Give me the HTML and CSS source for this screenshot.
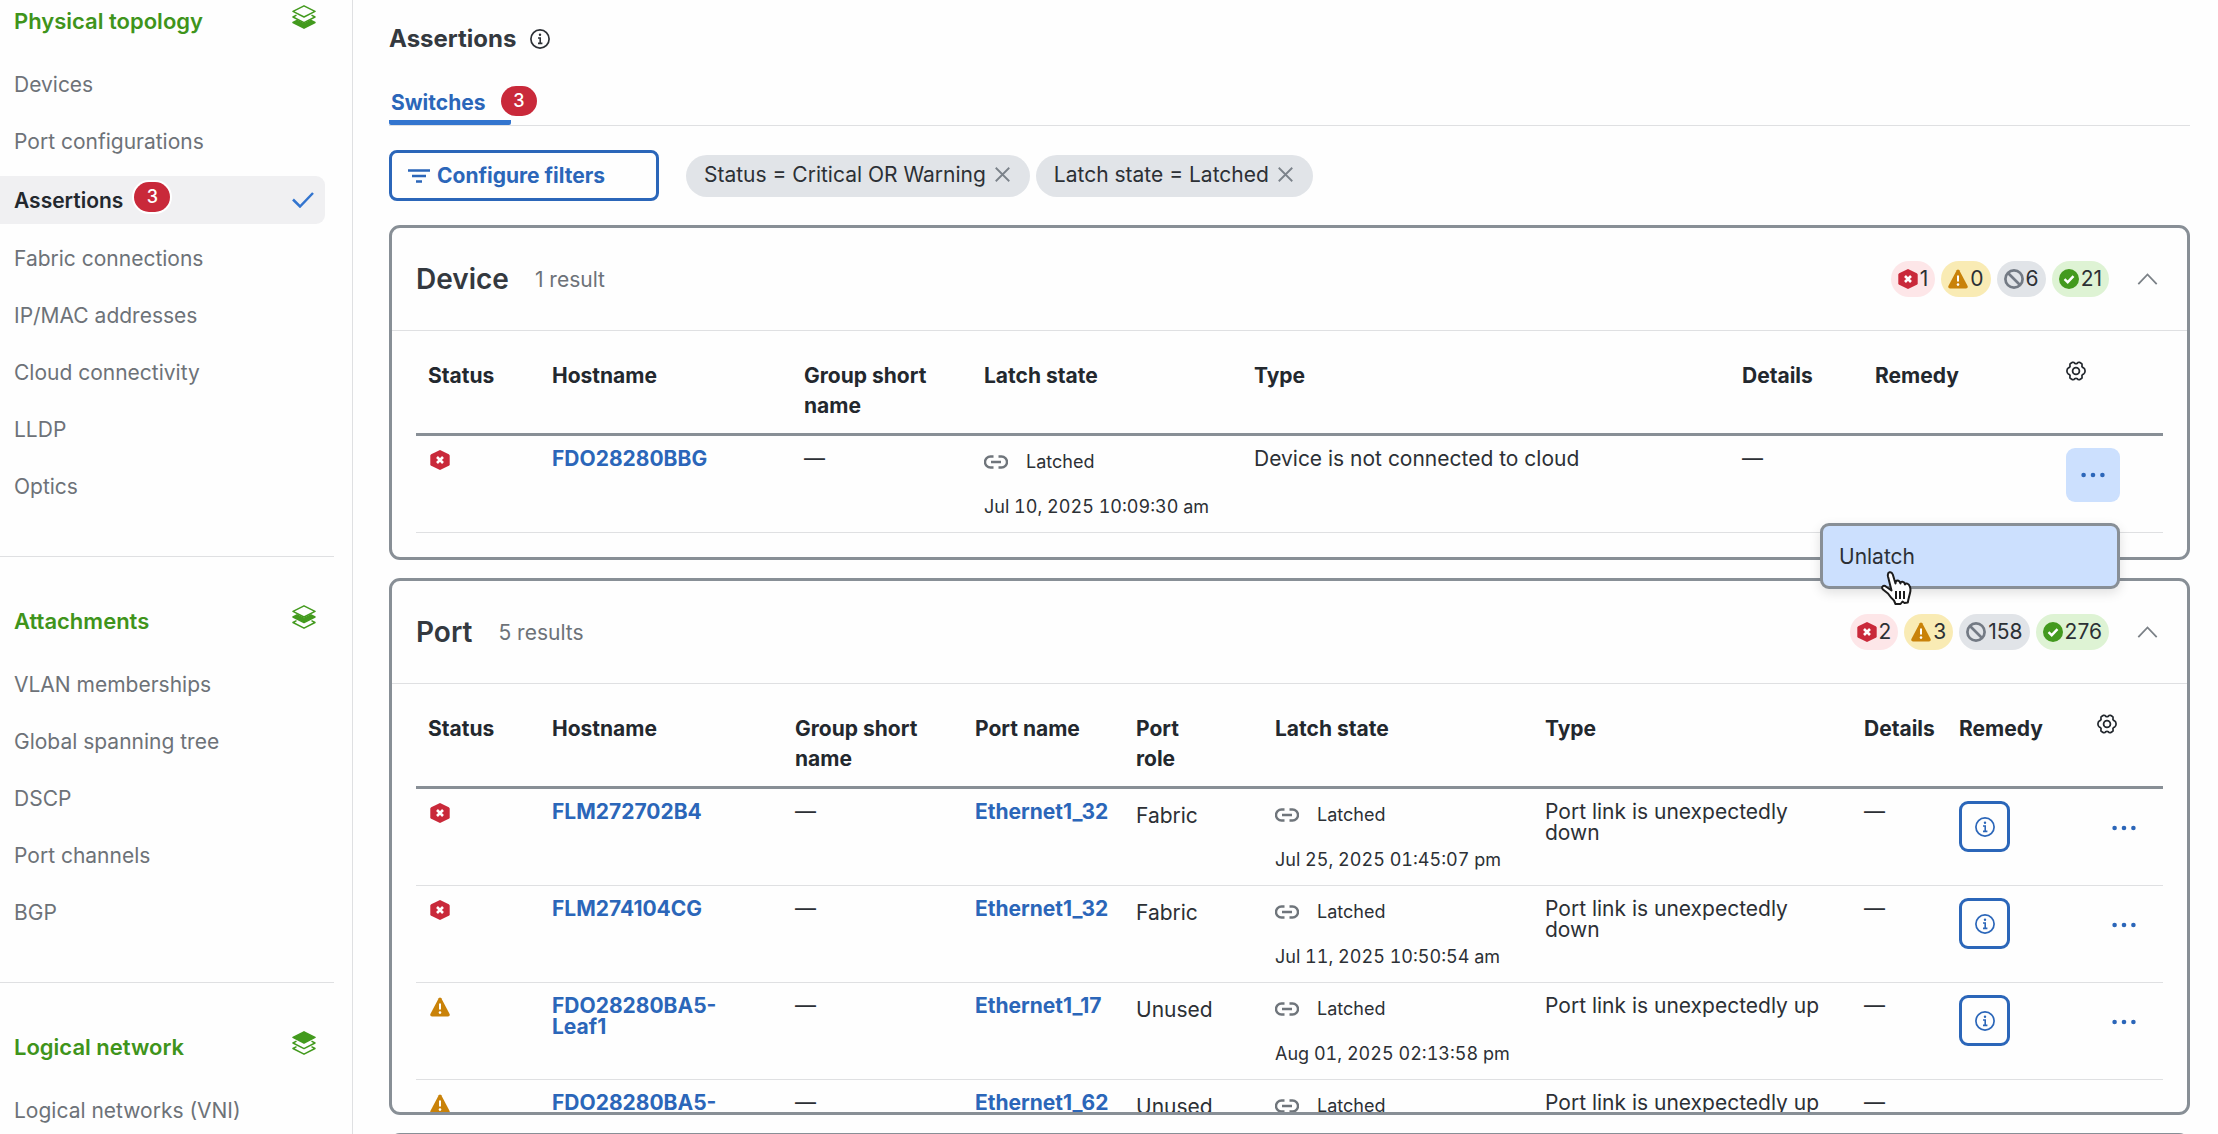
FILE: index.html
```html
<!DOCTYPE html>
<html lang="en">
<head>
    <meta charset="UTF-8">
    <meta name="viewport" content="width=device-width, initial-scale=1.0">
    <title>Assertions</title>
    <link rel="stylesheet" href="styles.css">
</head>
<body>

    <!-- Icons used more than once -->
    <svg class="icon-defs" aria-hidden="true">
        <symbol id="icon-critical" viewBox="0 0 20 20">
            <path d="M10 0 18.800 4.200Q19.700 4.700 19.700 5.700V14.300Q19.700 15.300 18.800 15.800L10 20 1.200 15.800Q.300 15.300 .300 14.300V5.700Q.300 4.700 1.200 4.200Z" fill="#c9293a"/>
            <path d="M7 7 13 13M13 7 7 13" stroke="#fff" stroke-width="2.600"/>
        </symbol>
        <symbol id="icon-warning" viewBox="0 0 20 20">
            <path d="M8.700 1.300Q10 -.500 11.300 1.300L19.600 17Q20.300 19.500 18 19.500H2Q-.300 19.500 .400 17Z" fill="#c98209"/>
            <path d="M10 6.500V12.500" stroke="#fff" stroke-width="2"/>
            <circle cx="10" cy="15.600" r="1.300" fill="#fff"/>
        </symbol>
        <symbol id="icon-disabled" viewBox="0 0 20 20">
            <circle cx="10" cy="10" r="8.600" fill="none" stroke="#737a84" stroke-width="2.700"/>
            <path d="M4 4 16 16" stroke="#737a84" stroke-width="2.700"/>
        </symbol>
        <symbol id="icon-ok" viewBox="0 0 20 20">
            <circle cx="10" cy="10" r="10" fill="#439a1e"/>
            <path d="M5.500 10.200 8.700 13.200 14.500 7.200" fill="none" stroke="#fff" stroke-width="2.400"/>
        </symbol>
        <symbol id="icon-link" viewBox="0 0 24 14">
            <path d="M9.500 1.500H6.500A5.500 5.500 0 0 0 6.500 12.500H9.500M14.500 1.500H17.500A5.500 5.500 0 0 1 17.500 12.500H14.500M7 7H17" fill="none" stroke="#6f757b" stroke-width="2.400"/>
        </symbol>
        <symbol id="icon-info" viewBox="0 0 20 20">
            <circle cx="10" cy="10" r="9.100" fill="none" stroke="currentColor" stroke-width="1.700"/>
            <circle cx="10" cy="5.800" r="1.200" fill="currentColor"/>
            <path d="M8 9H10.200V14.200M8 14.400H12.400" fill="none" stroke="currentColor" stroke-width="1.600"/>
        </symbol>
        <symbol id="icon-dots" viewBox="0 0 24 6">
            <circle cx="2.600" cy="3" r="2.300" fill="currentColor"/>
            <circle cx="12" cy="3" r="2.300" fill="currentColor"/>
            <circle cx="21.400" cy="3" r="2.300" fill="currentColor"/>
        </symbol>
        <symbol id="icon-up" viewBox="0 0 20 12">
            <path d="M.800 11.200 10 1.500 19.200 11.200" fill="none" stroke="#7b8187" stroke-width="1.800"/>
        </symbol>
        <symbol id="icon-close" viewBox="0 0 14 14">
            <path d="M.700 .700 13.300 13.300M13.300 .700 .700 13.300" stroke="#7b828a" stroke-width="1.700"/>
        </symbol>
        <symbol id="icon-gear" viewBox="0 0 20 20">
            <path d="M6.500 1.300Q8 1 8.600 2.200 10 3.200 11.400 2.200 12 1 13.500 1.300L15.800 2.700Q16.400 4 15.900 5.300 16.200 6.600 17.500 6.800 19 7.600 19.100 10 19 12.400 17.500 13.200 16.200 13.400 15.900 14.700 16.400 16 15.800 17.300L13.500 18.700Q12 19 11.400 17.800 10 16.800 8.600 17.800 8 19 6.500 18.700L4.200 17.300Q3.600 16 4.100 14.700 3.800 13.400 2.500 13.200 1 12.400 .900 10 1 7.600 2.500 6.800 3.800 6.600 4.100 5.300 3.600 4 4.200 2.700Z" fill="none" stroke="#23282e" stroke-width="1.700" stroke-linejoin="round"/>
            <circle cx="10" cy="10" r="3.400" fill="none" stroke="#23282e" stroke-width="1.800"/>
        </symbol>
    </svg>

    <div class="layout">

        <!-- Side navigation -->
        <nav class="sidebar">
            <section class="nav-section">
                <div class="nav-heading">
                    <h2>Physical topology</h2>
                    <svg class="layers" viewBox="0 0 24 24"><path d="M12 .800 23 6.400 12 12 1 6.400ZM4.500 10.200 1 12 12 17.600 23 12 19.500 10.200"/><path class="solid" d="M5 15.300 1 17.500 12 23.200 23 17.500 19 15.300 12 19Z"/></svg>
                </div>
                <ul>
                    <li><a href="#">Devices</a></li>
                    <li><a href="#">Port configurations</a></li>
                    <li class="active">
                        <a href="#">Assertions <span class="badge">3</span>
                            <svg class="check" viewBox="0 0 22 16"><path d="M1 7.500 8 14.500 21 1"/></svg>
                        </a>
                    </li>
                    <li><a href="#">Fabric connections</a></li>
                    <li><a href="#">IP/MAC addresses</a></li>
                    <li><a href="#">Cloud connectivity</a></li>
                    <li><a href="#">LLDP</a></li>
                    <li><a href="#">Optics</a></li>
                </ul>
            </section>
            <section class="nav-section">
                <div class="nav-heading">
                    <h2>Attachments</h2>
                    <svg class="layers" viewBox="0 0 24 24"><path d="M12 .800 23 6.400 12 12 1 6.400ZM4.500 15.700 1 17.500 12 23.200 23 17.500 19.500 15.700"/><path class="solid" d="M5 9.800 1 12 12 17.600 23 12 19 9.800 12 13.400Z"/></svg>
                </div>
                <ul>
                    <li><a href="#">VLAN memberships</a></li>
                    <li><a href="#">Global spanning tree</a></li>
                    <li><a href="#">DSCP</a></li>
                    <li><a href="#">Port channels</a></li>
                    <li><a href="#">BGP</a></li>
                </ul>
            </section>
            <section class="nav-section">
                <div class="nav-heading">
                    <h2>Logical network</h2>
                    <svg class="layers" viewBox="0 0 24 24"><path class="solid" d="M12 .800 23 6.400 12 12 1 6.400Z"/><path d="M4.500 10.200 1 12 12 17.600 23 12 19.500 10.200M4.500 15.700 1 17.500 12 23.200 23 17.500 19.500 15.700"/></svg>
                </div>
                <ul>
                    <li><a href="#">Logical networks (VNI)</a></li>
                </ul>
            </section>
        </nav>

        <main class="content">
            <div class="page-title">
                <h1>Assertions</h1>
                <svg class="info"><use href="#icon-info"/></svg>
            </div>

            <div class="tabs">
                <a href="#" class="tab">Switches</a>
                <span class="badge">3</span>
            </div>

            <div class="filters">
                <button class="configure">
                    <svg viewBox="0 0 22 14"><path d="M0 1.500H22M4 7H18M8 12.500H14"/></svg>
                    Configure filters
                </button>
                <div class="chips">
                    <span class="chip">Status = Critical OR Warning <button aria-label="Remove"><svg><use href="#icon-close"/></svg></button></span>
                    <span class="chip">Latch state = Latched <button aria-label="Remove"><svg><use href="#icon-close"/></svg></button></span>
                </div>
            </div>

            <!-- Device assertions -->
            <section class="card">
                <header class="card-header">
                    <h2>Device</h2>
                    <span class="results">1 result</span>
                    <div class="counts">
                        <span class="count critical"><svg><use href="#icon-critical"/></svg>1</span>
                        <span class="count warning"><svg><use href="#icon-warning"/></svg>0</span>
                        <span class="count disabled"><svg><use href="#icon-disabled"/></svg>6</span>
                        <span class="count ok"><svg><use href="#icon-ok"/></svg>21</span>
                    </div>
                    <button class="collapse" aria-label="Collapse"><svg><use href="#icon-up"/></svg></button>
                </header>
                <table class="device-table">
                    <colgroup>
                        <col class="col-status"><col class="col-host"><col class="col-group"><col class="col-latch"><col><col class="col-details"><col class="col-remedy"><col class="col-more">
                    </colgroup>
                    <thead>
                        <tr>
                            <th>Status</th>
                            <th>Hostname</th>
                            <th>Group short name</th>
                            <th>Latch state</th>
                            <th>Type</th>
                            <th>Details</th>
                            <th>Remedy</th>
                            <th><button class="settings" aria-label="Columns"><svg><use href="#icon-gear"/></svg></button></th>
                        </tr>
                    </thead>
                    <tbody>
                        <tr>
                            <td><svg class="status"><use href="#icon-critical"/></svg></td>
                            <td><a href="#">FDO28280BBG</a></td>
                            <td>—</td>
                            <td><div class="latch"><svg><use href="#icon-link"/></svg>Latched</div><div class="date">Jul 10, 2025 10:09:30 am</div></td>
                            <td>Device is not connected to cloud</td>
                            <td>—</td>
                            <td></td>
                            <td>
                                <div class="more-wrap">
                                    <button class="more open" aria-label="More"><svg><use href="#icon-dots"/></svg></button>
                                    <div class="menu">
                                        <button>Unlatch</button>
                                        <svg class="pointer" viewBox="0 0 32 36"><path d="M11.500 20.500 8 6.500Q7.300 3 9.500 2.300T12.800 4.500L15.500 13.500Q15.500 10.500 17.500 10.500T20.500 13.500Q20.500 11.500 22.500 11.800T25 14.500Q25.500 13 27.300 13.600T29.800 16.500Q31 19 30 23L28.500 29 27.800 32.500 24.500 33 22.500 31.500 20.500 34H15.500L14 30.500Q11 28 8 23.500L3 19.500Q1.300 17.500 2.800 16.300T6.500 17Z"/><path d="M16 21V29M20 21V29M24 21V29"/></svg>
                                    </div>
                                </div>
                            </td>
                        </tr>
                    </tbody>
                </table>
            </section>

            <!-- Port assertions -->
            <section class="card port-card">
                <header class="card-header">
                    <h2>Port</h2>
                    <span class="results">5 results</span>
                    <div class="counts">
                        <span class="count critical"><svg><use href="#icon-critical"/></svg>2</span>
                        <span class="count warning"><svg><use href="#icon-warning"/></svg>3</span>
                        <span class="count disabled"><svg><use href="#icon-disabled"/></svg>158</span>
                        <span class="count ok"><svg><use href="#icon-ok"/></svg>276</span>
                    </div>
                    <button class="collapse" aria-label="Collapse"><svg><use href="#icon-up"/></svg></button>
                </header>
                <table class="port-table">
                    <colgroup>
                        <col class="col-status"><col class="col-host"><col class="col-group"><col class="col-port"><col class="col-role"><col class="col-latch"><col><col class="col-details"><col class="col-remedy"><col class="col-more">
                    </colgroup>
                    <thead>
                        <tr>
                            <th>Status</th>
                            <th>Hostname</th>
                            <th>Group short name</th>
                            <th>Port name</th>
                            <th>Port<br>role</th>
                            <th>Latch state</th>
                            <th>Type</th>
                            <th>Details</th>
                            <th>Remedy</th>
                            <th><button class="settings" aria-label="Columns"><svg><use href="#icon-gear"/></svg></button></th>
                        </tr>
                    </thead>
                    <tbody>
                        <tr>
                            <td><svg class="status"><use href="#icon-critical"/></svg></td>
                            <td><a href="#">FLM272702B4</a></td>
                            <td>—</td>
                            <td><a href="#">Ethernet1_32</a></td>
                            <td class="role">Fabric</td>
                            <td><div class="latch"><svg><use href="#icon-link"/></svg>Latched</div><div class="date">Jul 25, 2025 01:45:07 pm</div></td>
                            <td>Port link is unexpectedly down</td>
                            <td>—</td>
                            <td><button class="remedy" aria-label="Remedy"><svg><use href="#icon-info"/></svg></button></td>
                            <td><button class="more" aria-label="More"><svg><use href="#icon-dots"/></svg></button></td>
                        </tr>
                        <tr>
                            <td><svg class="status"><use href="#icon-critical"/></svg></td>
                            <td><a href="#">FLM274104CG</a></td>
                            <td>—</td>
                            <td><a href="#">Ethernet1_32</a></td>
                            <td class="role">Fabric</td>
                            <td><div class="latch"><svg><use href="#icon-link"/></svg>Latched</div><div class="date">Jul 11, 2025 10:50:54 am</div></td>
                            <td>Port link is unexpectedly down</td>
                            <td>—</td>
                            <td><button class="remedy" aria-label="Remedy"><svg><use href="#icon-info"/></svg></button></td>
                            <td><button class="more" aria-label="More"><svg><use href="#icon-dots"/></svg></button></td>
                        </tr>
                        <tr>
                            <td><svg class="status"><use href="#icon-warning"/></svg></td>
                            <td><a href="#">FDO28280BA5-Leaf1</a></td>
                            <td>—</td>
                            <td><a href="#">Ethernet1_17</a></td>
                            <td class="role">Unused</td>
                            <td><div class="latch"><svg><use href="#icon-link"/></svg>Latched</div><div class="date">Aug 01, 2025 02:13:58 pm</div></td>
                            <td>Port link is unexpectedly up</td>
                            <td>—</td>
                            <td><button class="remedy" aria-label="Remedy"><svg><use href="#icon-info"/></svg></button></td>
                            <td><button class="more" aria-label="More"><svg><use href="#icon-dots"/></svg></button></td>
                        </tr>
                        <tr>
                            <td><svg class="status"><use href="#icon-warning"/></svg></td>
                            <td><a href="#">FDO28280BA5-</a></td>
                            <td>—</td>
                            <td><a href="#">Ethernet1_62</a></td>
                            <td class="role">Unused</td>
                            <td><div class="latch"><svg><use href="#icon-link"/></svg>Latched</div></td>
                            <td>Port link is unexpectedly up</td>
                            <td>—</td>
                            <td></td>
                            <td></td>
                        </tr>
                    </tbody>
                </table>
            </section>

            <section class="card next-card"></section>
        </main>
    </div>

</body>
</html>
```
FILE: styles.css
```css
/* General styling */
* {
    margin: 0;
    padding: 0;
    box-sizing: border-box;
}

body {
    font-family: Inter, "Liberation Sans", sans-serif;
    font-size: 21px;
    color: #2c3035;
    background-color: #fefefe;
}

a {
    color: #2b66b9;
    text-decoration: none;
}

button {
    font: inherit;
    color: inherit;
    background: none;
    border: none;
    cursor: pointer;
}

svg {
    display: block;
    flex-shrink: 0;
}

ul {
    list-style: none;
}

.icon-defs {
    display: none;
}

.layout {
    display: flex;
    height: 100vh;
    overflow: hidden;
}

/* Side navigation */
.sidebar {
    width: 353px;
    flex-shrink: 0;
    border-right: 1px solid #dfe0e2;
}

.nav-section {
    margin-right: 18px;
    padding: 48px 0 41px;
    border-bottom: 1px solid #dfe0e2;
}

.nav-section:first-child {
    padding-top: 5px;
}

.nav-heading {
    display: flex;
    justify-content: space-between;
    align-items: flex-start;
    margin-bottom: 18px;
    padding: 0 18px 0 14px;
}

.nav-heading h2 {
    font-size: 22px;
    line-height: 32px;
    margin-bottom: 1px;
    font-weight: 600;
    color: #3f941b;
}

.layers {
    width: 24px;
    height: 24px;
    fill: none;
    stroke: #439a1e;
    stroke-width: 1.5;
    stroke-linejoin: round;
}

.layers .solid {
    fill: #439a1e;
}

.nav-section a {
    display: flex;
    align-items: center;
    height: 57px;
    padding-left: 14px;
    color: #6d7278;
}

.nav-section .active a {
    height: 48px;
    margin: 6px 9px 6px 0;
    padding-right: 11px;
    background-color: #f0f0f2;
    border-radius: 0 9px 9px 0;
    color: #23282e;
    font-weight: 600;
}

.badge {
    width: 36px;
    height: 30px;
    border-radius: 15px;
    background-color: #c9293a;
    color: white;
    font-size: 18px;
    line-height: 30px;
    font-weight: 500;
    text-align: center;
}

.active .badge {
    margin: 0 0 6px 11px;
    box-shadow: 0 0 0 2px white;
}

.check {
    width: 22px;
    height: 16px;
    margin-left: auto;
    fill: none;
    stroke: #3375cf;
    stroke-width: 2.5;
}

/* Main content */
.content {
    flex: 1;
    min-width: 0;
    padding: 24px 28px 0 36px;
}

.page-title {
    display: flex;
    align-items: center;
    gap: 14px;
    height: 30px;
}

.page-title h1 {
    font-size: 24px;
    line-height: 30px;
    font-weight: 700;
    color: #34393f;
}

.info {
    width: 20px;
    height: 20px;
}

.tabs {
    display: flex;
    align-items: flex-start;
    height: 72px;
    padding-top: 32px;
    border-bottom: 1px solid #dfe0e2;
}

.tab {
    width: 122px;
    height: 39px;
    margin-right: -10px;
    padding-left: 2px;
    background: linear-gradient(#3375cf, #3375cf) bottom / 100% 5px no-repeat;
    border-radius: 2px;
    line-height: 34px;
    font-weight: 700;
}

.filters {
    display: flex;
    align-items: center;
    gap: 27px;
    margin: 24px 0;
}

.configure {
    display: flex;
    align-items: center;
    gap: 7px;
    width: 270px;
    height: 51px;
    padding: 0 16px;
    border: 3px solid #2b66b9;
    border-radius: 8px;
    color: #2b66b9;
    font-weight: 700;
}

.configure svg {
    width: 22px;
    height: 14px;
    stroke: #2b66b9;
    stroke-width: 2.4;
}

.chips {
    display: flex;
    gap: 6px;
}

.chip {
    display: flex;
    align-items: center;
    gap: 9px;
    height: 42px;
    padding: 0 20px 2px 18px;
    border-radius: 21px;
    background-color: #e1e4e8;
}

.chip svg {
    width: 15px;
    height: 15px;
}

/* Cards */
.card {
    margin-bottom: 18px;
    padding-bottom: 24px;
    border: 3px solid #888f96;
    border-radius: 11px;
    background-color: #fefefe;
}

.port-card {
    height: 537px;
    padding-bottom: 0;
    overflow: hidden;
}

.next-card {
    height: 120px;
}

.card-header {
    display: flex;
    align-items: center;
    height: 103px;
    padding: 0 29px 0 24px;
    border-bottom: 1px solid #dfe0e2;
}

.card-header h2 {
    font-size: 28px;
    font-weight: 600;
    color: #34393f;
}

.results {
    margin-left: 26px;
    color: #6d7278;
}

.counts {
    display: flex;
    gap: 6px;
    margin-left: auto;
}

.count {
    display: flex;
    align-items: center;
    gap: 2px;
    height: 36px;
    padding: 0 7px;
    border-radius: 18px;
    line-height: 34px;
}

.count svg {
    width: 20px;
    height: 20px;
}

.critical {
    background-color: #fde6e8;
}

.warning {
    background-color: #f9ebb4;
}

.disabled {
    background-color: #e1e4e8;
}

.ok {
    background-color: #def3d4;
}

.collapse {
    margin-left: 28px;
}

.collapse svg {
    width: 21px;
    height: 12px;
}

/* Tables */
table {
    width: calc(100% - 48px);
    margin: 0 24px;
    table-layout: fixed;
    border-collapse: separate;
    border-spacing: 0;
}

th {
    height: 105px;
    padding: 30px 12px 12px;
    border-bottom: 3px solid #888f96;
    line-height: 30px;
    font-weight: 700;
    text-align: left;
    vertical-align: top;
    color: #23282e;
}

td {
    height: 97px;
    padding: 12px 12px 0;
    border-bottom: 1px solid #dfe0e2;
    line-height: 21px;
    vertical-align: top;
}

td a {
    font-weight: 700;
}

.col-status {
    width: 124px;
}

.col-host {
    width: 252px;
}

.col-group {
    width: 180px;
}

.col-latch {
    width: 270px;
}

.col-details {
    width: 133px;
}

.col-remedy {
    width: 191px;
}

.col-more {
    width: 109px;
}

.col-port {
    width: 161px;
}

.col-role {
    width: 139px;
}

.port-table .col-host {
    width: 243px;
}

.port-table .col-details {
    width: 95px;
}

.port-table .col-remedy {
    width: 138px;
}

.port-table .col-more {
    width: 78px;
}

.port-table th,
.port-table td {
    padding-right: 24px;
}

.settings {
    display: block;
}

.settings svg,
.status {
    width: 20px;
    height: 20px;
}

.status {
    margin: 2px 0 0 2px;
}

.latch {
    display: flex;
    align-items: center;
    gap: 18px;
    height: 27px;
    font-size: 18px;
}

.latch svg {
    width: 24px;
    height: 14px;
}

.date {
    margin-top: 21px;
    font-size: 18px;
    font-variant-numeric: tabular-nums;
    white-space: nowrap;
}

td.role {
    padding-top: 16px;
}

.remedy {
    display: flex;
    align-items: center;
    justify-content: center;
    width: 51px;
    height: 51px;
    border: 3px solid #2b66b9;
    border-radius: 9px;
    color: #2b66b9;
}

.remedy svg {
    width: 20px;
    height: 20px;
}

.more {
    display: flex;
    align-items: center;
    justify-content: center;
    width: 54px;
    height: 54px;
    border-radius: 9px;
    color: #2b66b9;
}

.more svg {
    width: 24px;
    height: 6px;
}

.more.open {
    background-color: #cce0fe;
}

/* Row menu */
.more-wrap {
    position: relative;
    width: 54px;
}

.menu {
    position: absolute;
    top: 75px;
    right: 0;
    z-index: 1;
    width: 300px;
    border: 3px solid #888f96;
    border-radius: 9px;
    background-color: #cce0fe;
    box-shadow: 0 4px 12px rgba(0, 0, 0, 0.12);
}

.menu button {
    display: block;
    width: 100%;
    height: 60px;
    padding: 0 16px;
    text-align: left;
}

.pointer {
    position: absolute;
    top: 44px;
    left: 57px;
    width: 32px;
    height: 36px;
    fill: white;
    stroke: #1c1c1c;
    stroke-width: 2;
    stroke-linejoin: round;
}
```
